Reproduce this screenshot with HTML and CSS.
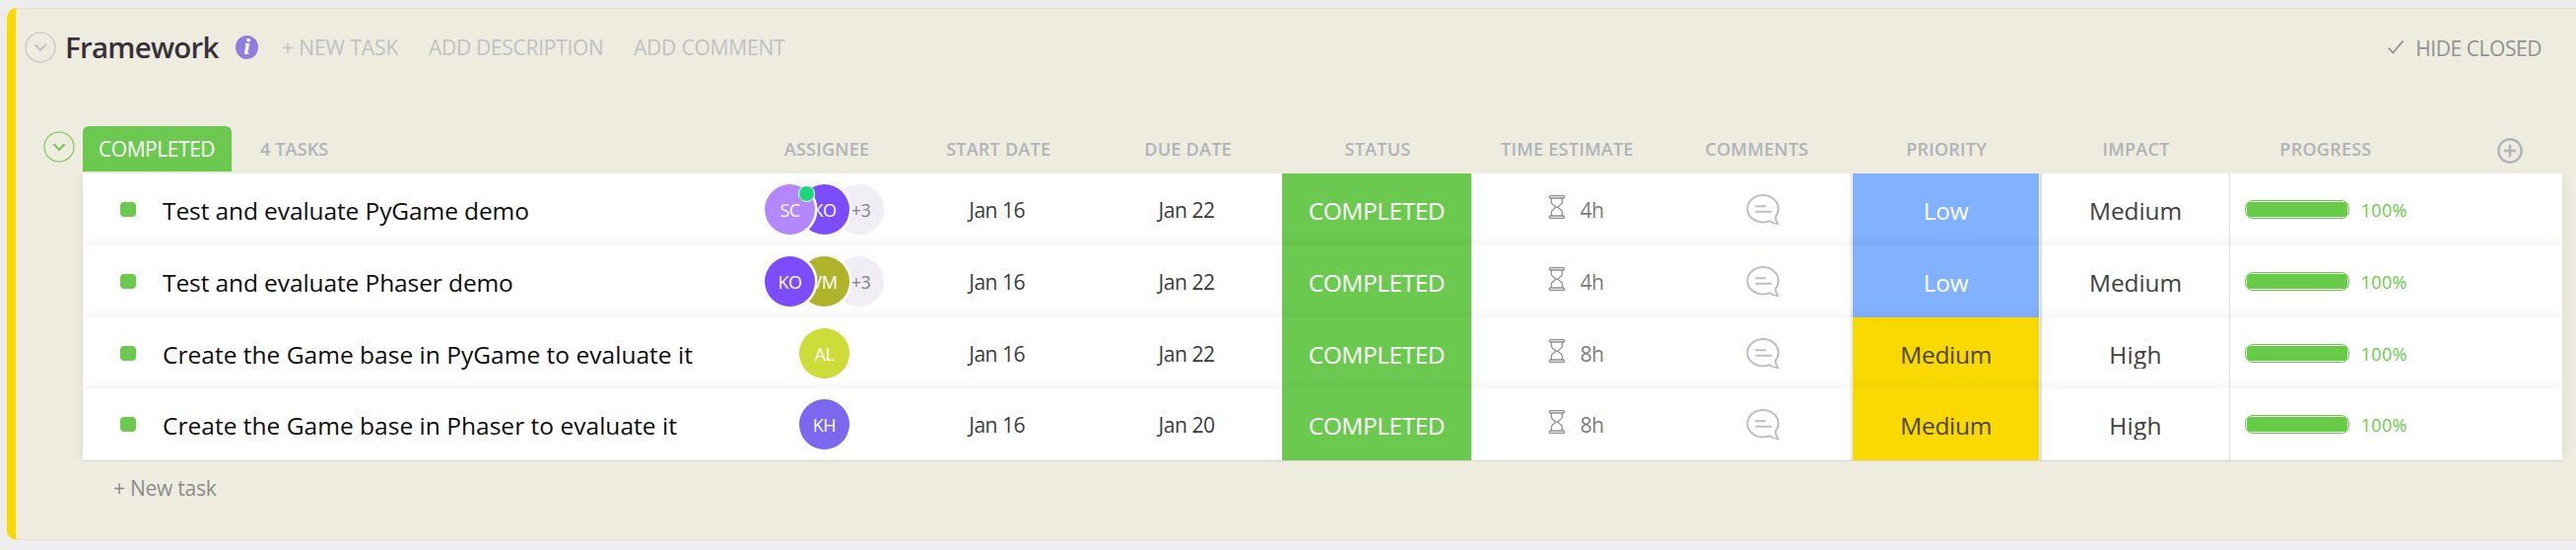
FILE: index.html
```html
<!DOCTYPE html>
<html lang="en">
<head>
<meta charset="utf-8">
<title>Framework</title>
<link rel="stylesheet" href="styles.css">
</head>
<body>
<svg class="sprite" aria-hidden="true">
  <symbol id="chev" viewBox="0 0 32 32"><circle cx="16" cy="16" r="15" fill="none" stroke="currentColor" stroke-width="1.1"/><path d="M11 13.8l5 5 5-5" fill="none" stroke="currentColor" stroke-width="2" stroke-linecap="round"/></symbol>
  <symbol id="glass" viewBox="0 0 18 26"><g fill="none" stroke="currentColor" stroke-width="1.3"><rect x="1.2" y="1.6" width="15.2" height="2.4" rx="1"/><rect x="1.2" y="22" width="15.2" height="2.4" rx="1"/><path d="M3.3 4v4.2c0 2.6 4.1 3.4 4.1 5s-4.1 2.300-4.1 5V22M14.300 4v4.200c0 2.600-4.100 3.400-4.100 5s4.100 2.300 4.100 5V22M6.500 13.200h4.600"/></g></symbol>
  <symbol id="chat" viewBox="0 0 36 33"><path d="M30.600 23.800c2-2.300 3-5 3-8C33.600 8 26.600 2 18 2S2.200 8 2.200 15.800 9.200 29.500 18 29.500c2.500 0 4.600-.300 6.700-1.300 2.300 1.800 5 2.900 8.600 2.900-1.800-2-2.600-4.300-2.700-7.300z" fill="none" stroke="currentColor" stroke-width="2" stroke-linejoin="round"/><path d="M10.200 13.300h10.600M10.200 18.700h16.600" stroke="currentColor" stroke-width="1.900"/></symbol>
</svg>
<main class="card">
  <header class="head">
    <svg class="chev chev-list"><use href="#chev"/></svg>
    <h1 class="title">Framework</h1>
    <span class="info">i</span>
    <span class="act act-new">+ NEW TASK</span>
    <span class="act act-desc">ADD DESCRIPTION</span>
    <span class="act act-com">ADD COMMENT</span>
    <svg class="check" viewBox="0 0 18 16"><path d="M1.500 8.500l4.800 5L16.500 1.500" fill="none" stroke="currentColor" stroke-width="1.600"/></svg>
    <span class="hide">HIDE CLOSED</span>
  </header>
  <section class="group">
    <svg class="chev chev-group"><use href="#chev"/></svg>
    <div class="grid cols">
      <div class="group-name"><span class="badge">COMPLETED</span><span class="count">4 TASKS</span></div>
      <span>ASSIGNEE</span><span>START DATE</span><span>DUE DATE</span><span>STATUS</span><span>TIME ESTIMATE</span><span>COMMENTS</span><span>PRIORITY</span><span>IMPACT</span><span>PROGRESS</span>
      <svg class="plus" viewBox="0 0 26 26"><g fill="none" stroke="currentColor" stroke-width="2.400"><circle cx="13" cy="13" r="11.700"/><path d="M13 6.800v12.400M6.800 13h12.400"/></g></svg>
    </div>
  </section>
  <section class="table">
    <div class="grid row">
      <div class="name"><i class="sq"></i>Test and evaluate PyGame demo</div>
      <div class="people"><span class="av lilac">SC<i class="online"></i></span><span class="av violet second">KO</span><span class="av more">+3</span></div>
      <div class="date">Jan 16</div><div class="date">Jan 22</div>
      <div class="status">COMPLETED</div>
      <div class="time"><svg class="glass"><use href="#glass"/></svg>4h</div>
      <div class="chatcell"><svg class="chat"><use href="#chat"/></svg></div>
      <div class="prio"><span class="fill low">Low</span></div>
      <div class="impact"><span class="value">Medium</span></div>
      <div class="prog"><span class="bar"><i style="width:100%"></i></span>100%</div>
      <div></div>
    </div>
    <div class="grid row">
      <div class="name"><i class="sq"></i>Test and evaluate Phaser demo</div>
      <div class="people"><span class="av violet">KO</span><span class="av olive second">VM</span><span class="av more">+3</span></div>
      <div class="date">Jan 16</div><div class="date">Jan 22</div>
      <div class="status">COMPLETED</div>
      <div class="time"><svg class="glass"><use href="#glass"/></svg>4h</div>
      <div class="chatcell"><svg class="chat"><use href="#chat"/></svg></div>
      <div class="prio"><span class="fill low">Low</span></div>
      <div class="impact"><span class="value">Medium</span></div>
      <div class="prog"><span class="bar"><i style="width:100%"></i></span>100%</div>
      <div></div>
    </div>
    <div class="grid row">
      <div class="name wide"><i class="sq"></i>Create the Game base in PyGame to evaluate it</div>
      <div class="people"><span class="av lime">AL</span></div>
      <div class="date">Jan 16</div><div class="date">Jan 22</div>
      <div class="status">COMPLETED</div>
      <div class="time"><svg class="glass"><use href="#glass"/></svg>8h</div>
      <div class="chatcell"><svg class="chat"><use href="#chat"/></svg></div>
      <div class="prio"><span class="fill medium">Medium</span></div>
      <div class="impact"><span class="value clip">High</span></div>
      <div class="prog"><span class="bar"><i style="width:100%"></i></span>100%</div>
      <div></div>
    </div>
    <div class="grid row">
      <div class="name wide"><i class="sq"></i>Create the Game base in Phaser to evaluate it</div>
      <div class="people"><span class="av indigo">KH</span></div>
      <div class="date">Jan 16</div><div class="date">Jan 20</div>
      <div class="status">COMPLETED</div>
      <div class="time"><svg class="glass"><use href="#glass"/></svg>8h</div>
      <div class="chatcell"><svg class="chat"><use href="#chat"/></svg></div>
      <div class="prio"><span class="fill medium">Medium</span></div>
      <div class="impact"><span class="value clip">High</span></div>
      <div class="prog"><span class="bar"><i style="width:100%"></i></span>100%</div>
      <div></div>
    </div>
  </section>
  <div class="newtask">+ New task</div>
</main>
</body>
</html>
```
FILE: styles.css
```css
* { box-sizing: border-box; }
body {
  margin: 0;
  height: 558px;
  padding: 8px 0 0 7px;
  overflow: hidden;
  background: #ededed;
  font-family: "Open Sans", "Noto Sans", sans-serif;
}
.sprite { display: none; }
.card {
  height: 540px;
  border-left: 9px solid #fad900;
  border-radius: 10px 0 0 10px;
  background: #eeecdf;
  box-shadow: inset 0 1px #e3e2d9, inset 0 -1px #e3e2d9;
}

/* List header */
.head {
  display: flex;
  align-items: center;
  height: 79px;
  padding-left: 9px;
  color: #c0c1c4;
  font-size: 21px;
  line-height: 28px;
  white-space: nowrap;
}
.chev { flex: none; width: 32px; height: 32px; }
.chev-list { color: #bfc0c6; }
.title {
  width: 172px;
  margin: 0;
  padding-left: 9px;
  color: #37303a;
  font-size: 29.5px;
  font-weight: 580;
  line-height: 40px;
  letter-spacing: -0.75px;
}
.info {
  width: 23px;
  height: 24px;
  margin-left: 10px;
  border-radius: 50%;
  background: #8f7ee0;
  color: #fff;
  font: italic bold 24px/22px "Liberation Serif", serif;
  text-align: center;
}
.act-new { width: 149px; margin-left: 24px; letter-spacing: -0.08px; }
.act-desc { width: 208px; letter-spacing: -0.29px; }
.act-com { letter-spacing: -0.2px; }
.check { width: 18px; height: 16px; margin-left: auto; color: #8b8d90; }
.hide {
  padding: 3px 0 0;
  margin: 0 35px 0 11px;
  color: #8f9194;
  letter-spacing: -0.44px;
}

/* Status group heading and column names */
.group { display: flex; height: 89px; padding: 41px 0 0 28px; }
.chev-group { margin: 5px 8px 0 0; color: #6bc950; }
.grid {
  display: grid;
  grid-template-columns: 676px 156px repeat(8, 192.4px) 144.8px;
  width: 2516px;
}
.cols {
  height: 46px;
  align-items: center;
  justify-items: center;
  color: #b0b3ba;
  font-size: 18px;
  font-weight: 650;
  line-height: 46px;
  letter-spacing: 0.25px;
}
.cols > span { padding-left: 2px; }
.group-name { display: flex; justify-self: stretch; }
.badge {
  width: 151px;
  height: 46px;
  padding-left: 16px;
  border-radius: 6px 6px 0 0;
  background: #6bc950;
  color: #fff;
  font-size: 21px;
  font-weight: 400;
  letter-spacing: -0.45px;
}
.count { padding-left: 29px; letter-spacing: 0.15px; }
.plus { width: 26px; height: 26px; margin: 3px 0 0 39px; }

/* Task rows */
.table {
  width: 2516px;
  margin-left: 68px;
  background: #fff;
  box-shadow: 0 0 14px rgba(0, 0, 0, .07), 0 1px #dedccf;
  clip-path: inset(0 -14px -1px);
}
.row { position: relative; height: 73px; white-space: nowrap; }
.row:nth-child(3) { height: 72px; }
.row:not(:last-child)::after {
  content: "";
  position: absolute;
  inset: auto 0 0;
  height: 13px;
  background: linear-gradient(rgba(0, 0, 0, 0), rgba(0, 0, 0, .03));
}
.row > div { display: flex; align-items: center; justify-content: center; }
.row .name {
  justify-content: flex-start;
  padding: 2px 0 0 38px;
  color: #0d0d0d;
  font-size: 24.5px;
  font-weight: 370;
  letter-spacing: -0.1px;
}
.row .wide { letter-spacing: 0.02px; }
.sq { width: 16px; height: 15px; margin: -2px 27px 0 0; border-radius: 4px; background: #6bc950; }
.row .people { padding-right: 3px; }
.av {
  position: relative;
  flex: none;
  width: 51px;
  height: 51px;
  border-radius: 50%;
  color: #fff;
  font-size: 18px;
  line-height: 53px;
  letter-spacing: -0.5px;
  text-align: center;
}
.av:not(:only-child) { z-index: 3; box-shadow: 0 0 0 2.5px #fff; }
.av:not(:first-child) { margin-left: -16px; }
.av.second { z-index: 2; }
.av.more { z-index: 1; background: #f0edf5; color: #7c828d; font-weight: 500; padding-left: 4px; }
.lilac { background: #b388ff; }
.violet { background: #7c4dff; }
.olive { background: #afb42b; }
.lime { background: #cddc39; }
.indigo { background: #7b68ee; }
.online {
  position: absolute;
  top: 1px;
  right: 0;
  width: 17px;
  height: 17px;
  border: 1px solid #fff;
  border-radius: 50%;
  background: #1bd67b;
}
.date { color: #3b3b3b; font-size: 21px; font-weight: 370; letter-spacing: -0.45px; padding-right: 1px; }
.row .status {
  padding-top: 2px;
  background: #6bc950;
  color: #fff;
  font-size: 24.5px;
  letter-spacing: -0.47px;
}
.time { gap: 14px; color: #7c7c7c; font-size: 21px; letter-spacing: -0.5px; }
.row .time { padding: 1px 0 0 20px; }
.glass { width: 18px; height: 26px; margin-top: -7px; color: #8f8f8f; }
.row .chatcell { padding-left: 14px; }
.chat { width: 36px; height: 33px; color: #bcbfc8; }
.prio { border-left: 1px solid #dcdde2; padding: 0 1px 0 1px; }
.fill {
  align-self: stretch;
  flex: 1;
  padding-top: 2px;
  font-size: 24.5px;
  line-height: 71px;
  letter-spacing: -0.3px;
  text-align: center;
}
.low { background: #82b1ff; color: #fff; }
.medium { background: #f9d900; color: #4d4416; font-weight: 370; }
.row .impact {
  border-left: 2px solid #dcdfeb;
  border-right: 1px solid #dcdde0;
  color: #404040;
  font-size: 24.5px;
  font-weight: 370;
  letter-spacing: -0.1px;
  align-items: flex-start;
  padding-top: 21px;
}
.value { line-height: 34px; }
.clip { height: 31px; overflow: hidden; letter-spacing: 0.3px; }
.row .prog {
  justify-content: flex-start;
  gap: 12px;
  padding: 1px 0 0 15px;
  color: #67cb48;
  font-size: 18px;
  letter-spacing: 0.3px;
}
.bar {
  width: 106px;
  height: 19px;
  margin-top: -1px;
  padding: 1px;
  border: 1px solid #67cb48;
  border-radius: 8px;
}
.bar i { display: block; height: 15px; border-radius: 4px; background: #67cb48; }
.newtask {
  padding: 12px 0 0 99px;
  color: #8a8b8d;
  font-size: 21px;
  line-height: 32px;
  letter-spacing: -0.25px;
}
```
